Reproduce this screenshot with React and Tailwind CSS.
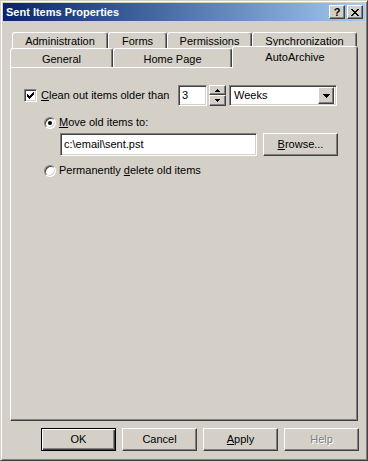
const raised =
  'border border-t-white border-l-white border-r-[#404040] border-b-[#404040] shadow-[inset_-1px_-1px_#808080]';
const sunken =
  'border border-t-[#808080] border-l-[#808080] border-r-white border-b-white shadow-[inset_1px_1px_#404040,inset_-1px_-1px_#d4d0c8]';

// tiny bitmap glyphs, drawn pixel by pixel like the old system ones
const CHECK = ['......X', '.....XX', 'X...XXX', 'XX.XXX.', 'XXXXX..', '.XXX...', '..X....'];
const CLOSE = ['XX....XX', '.XX..XX.', '..XXXX..', '...XX...', '..XXXX..', '.XX..XX.', 'XX....XX'];
const UP = ['..X..', '.XXX.', 'XXXXX'];
const DOWN = ['XXXXX', '.XXX.', '..X..'];
const DROP = ['XXXXXXX', '.XXXXX.', '..XXX..', '...X...'];

const Pixels = ({ rows, className = '' }) => (
  <svg
    width={rows[0].length}
    height={rows.length}
    className={className}
    shapeRendering="crispEdges"
  >
    {rows.map((r, y) =>
      r.split('').map((c, x) =>
        c === 'X' ? <rect key={`${x}-${y}`} x={x} y={y} width="1" height="1" fill="currentColor" /> : null
      )
    )}
  </svg>
);

const Radio = ({ checked }) => (
  <div className="w-[12px] h-[12px] shrink-0 rounded-full border border-t-[#808080] border-l-[#808080] border-r-white border-b-white shadow-[inset_1px_1px_#404040,inset_-1px_-1px_#d4d0c8] bg-white flex items-center justify-center">
    {checked && <div className="w-[4px] h-[4px] rounded-full bg-black" />}
  </div>
);

const Tab = ({ className = '', children }) => (
  <div
    className={`bg-[#d4d0c8] border-t border-l border-r border-t-white border-l-white border-r-[#404040] shadow-[inset_-1px_0_#808080] rounded-t-[3px] flex justify-center ${className}`}
  >
    {children}
  </div>
);

const Button = ({ className = '', children }) => (
  <div className={`w-[75px] h-[23px] bg-[#d4d0c8] flex items-center justify-center ${className}`}>
    {children}
  </div>
);

export default function App() {
  return (
    <div className="w-[368px] h-[461px] bg-[#d4d0c8] border border-t-[#d4d0c8] border-l-[#d4d0c8] border-r-[#404040] border-b-[#404040] shadow-[inset_1px_1px_white,inset_-1px_-1px_#808080] p-[2px] text-[11px] leading-[13px] text-black font-['Liberation_Sans',Arial,sans-serif] select-none">
      {/* Title bar */}
      <div className="h-[18px] bg-linear-to-r from-[#0a246a] to-[#a6caf0] flex items-center pl-[3px] pr-[2px]">
        <div className="flex-1 text-white font-bold text-[11px]">Sent Items Properties</div>
        <div className="flex gap-[2px]">
          <div className={`w-[16px] h-[14px] bg-[#d4d0c8] ${raised} flex items-center justify-center font-bold text-[11px] leading-none`}>
            ?
          </div>
          <div className={`w-[16px] h-[14px] bg-[#d4d0c8] ${raised} flex items-center justify-center`}>
            <Pixels rows={CLOSE} />
          </div>
        </div>
      </div>

      {/* Tabs, back row */}
      <div className="mt-[11px] ml-[9px] flex h-[16px]">
        <Tab className="w-[96px] items-start pt-[2px]">Administration</Tab>
        <Tab className="w-[59px] items-start pt-[2px]">Forms</Tab>
        <Tab className="w-[85px] items-start pt-[2px]">Permissions</Tab>
        <Tab className="w-[105px] items-start pt-[2px]">Synchronization</Tab>
      </div>

      {/* Tabs, front row */}
      <div className="relative -mt-[2px] ml-[7px] flex items-end h-[21px]">
        <Tab className="w-[103px] h-[19px] items-center pt-[3px]">General</Tab>
        <Tab className="w-[119px] h-[19px] items-center pt-[3px]">Home Page</Tab>
        <Tab className="relative z-10 w-[126px] h-[22px] -mb-[1px] items-center pb-[1px]">AutoArchive</Tab>
      </div>

      {/* Page */}
      <div className={`ml-[7px] w-[348px] h-[354px] ${raised} pt-[17px] pl-[13px]`}>
        <div className="flex items-center h-[21px]">
          <div className="w-[154px] flex items-center gap-[4px]">
            <div className={`w-[13px] h-[13px] bg-white ${sunken} flex items-center justify-center`}>
              <Pixels rows={CHECK} />
            </div>
            <span>
              <span className="underline">C</span>lean out items older than
            </span>
          </div>
          <div className={`w-[29px] h-[21px] bg-white ${sunken} flex items-center pl-[3px]`}>3</div>
          <div className="ml-[2px] w-[17px] h-[21px] flex flex-col">
            <div className={`h-[10px] ${raised} flex items-center justify-center`}>
              <Pixels rows={UP} />
            </div>
            <div className={`h-[11px] ${raised} flex items-center justify-center`}>
              <Pixels rows={DOWN} />
            </div>
          </div>
          <div className={`ml-[3px] w-[108px] h-[21px] bg-white ${sunken} flex items-center justify-between pl-[4px] pr-[2px]`}>
            <span>Weeks</span>
            <div className={`w-[16px] h-[17px] bg-[#d4d0c8] ${raised} flex items-center justify-center`}>
              <Pixels rows={DROP} />
            </div>
          </div>
        </div>

        <div className="mt-[10px] ml-[20px] flex items-center gap-[3px] h-[13px]">
          <Radio checked />
          <span>
            <span className="underline">M</span>ove old items to:
          </span>
        </div>

        <div className="mt-[4px] ml-[36px] flex gap-[6px]">
          <div className={`w-[197px] h-[23px] bg-white ${sunken} flex items-center pl-[3px]`}>
            {'c:\\email\\sent.pst'}
          </div>
          <Button className={raised}>
            <span>
              <span className="underline">B</span>rowse...
            </span>
          </Button>
        </div>

        <div className="mt-[8px] ml-[20px] flex items-center gap-[3px] h-[13px]">
          <Radio />
          <span>
            Permanently <span className="underline">d</span>elete old items
          </span>
        </div>
      </div>

      {/* Dialog buttons */}
      <div className="mt-[7px] ml-[38px] flex gap-[6px]">
        <Button className="border border-black shadow-[inset_1px_1px_white,inset_-1px_-1px_#404040,inset_-2px_-2px_#808080]">
          OK
        </Button>
        <Button className={raised}>Cancel</Button>
        <Button className={raised}>
          <span>
            <span className="underline">A</span>pply
          </span>
        </Button>
        <Button className={`${raised} text-[#808080] [text-shadow:1px_1px_white]`}>Help</Button>
      </div>
    </div>
  );
}
